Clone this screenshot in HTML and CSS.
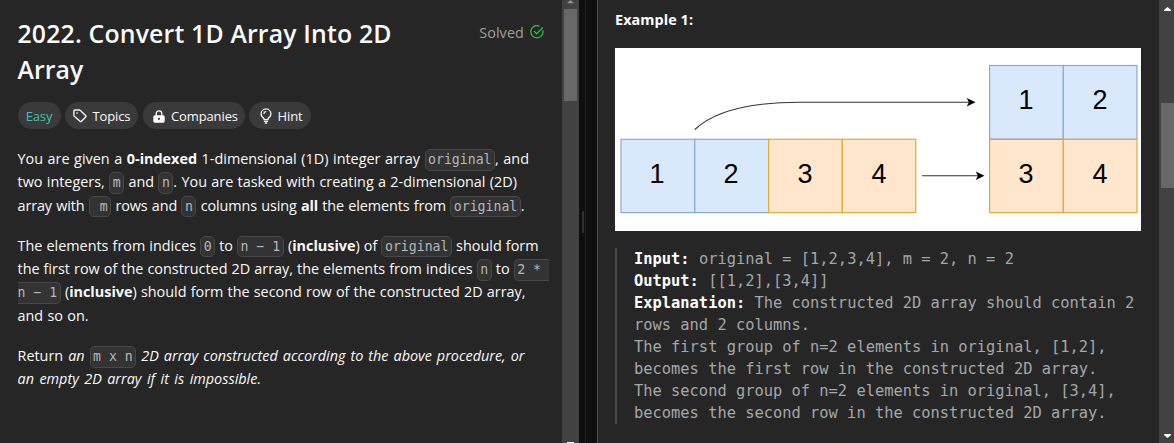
FILE: index.html
```html
<!DOCTYPE html>
<html lang="en">
<head>
<meta charset="utf-8">
<title>2022. Convert 1D Array Into 2D Array</title>
<link rel="stylesheet" href="styles.css">
</head>
<body>
<main class="app">
  <section class="problem">
    <header class="head">
      <h1><span class="line t1">2022. Convert 1D Array Into 2D</span><span class="line t2">Array</span></h1>
      <div class="solved"><span class="line">Solved</span>
        <svg width="14" height="14" viewBox="0 0 14 14" fill="none" stroke="#28b849" stroke-width="1.35" stroke-linecap="round" stroke-linejoin="round"><path d="M9 1A6.1 6.1 0 1 0 12.9 5.6M4.5 6.5l2.2 2.3 5.8-6"/></svg>
      </div>
    </header>
    <div class="tags">
      <span class="tag easy"><b class="line">Easy</b></span>
      <span class="tag topics"><svg width="14" height="14" viewBox="0 0 14 14" fill="none" stroke="#f2f2f2" stroke-width="1.4" stroke-linejoin="round"><path d="M.9 1.8Q.9 1 1.7 1H6.5Q7 1 7.4 1.4L12.8 6.8Q13.3 7.3 12.8 7.8L8.3 12.6Q7.8 13.1 7.3 12.6L1.3 7.2Q.9 6.8 .9 6.3Z"/><circle cx="4" cy="4.1" r=".8" fill="#f2f2f2" stroke="none"/></svg><b class="line">Topics</b></span>
      <span class="tag companies"><svg width="12" height="13" viewBox="0 0 12 13"><path d="M3.2 6V3.7a2.8 2.8 0 0 1 5.6 0V6" fill="none" stroke="#fff" stroke-width="1.3"/><rect x=".3" y="5.2" width="11.4" height="7.5" rx="1.6" fill="#fff"/><circle cx="6" cy="8.8" r="1.1" fill="#333"/></svg><b class="line">Companies</b></span>
      <span class="tag hint"><svg width="12" height="16" viewBox="0 0 12 16" fill="none" stroke="#f2f2f2" stroke-width="1.3" stroke-linecap="round"><path d="M4 11.6V10.5Q1.1 8.8 1.1 5.8a4.9 4.9 0 0 1 9.8 0Q10.9 8.8 8 10.5V11.6ZM4.4 13.4H7.6M5.3 15H6.7M4 5.6Q4 3.9 5.7 3.7"/></svg><b class="line">Hint</b></span>
    </div>
    <p>
      <span class="line w1">You are given a <strong>0-indexed</strong> 1-dimensional (1D) integer array <code>original</code>, and</span>
      <span class="line w2">two integers, <code>m</code> and <code>n</code>. You are tasked with creating a 2-dimensional (2D)</span>
      <span class="line w3">array with <code class="lead">m</code> rows and <code>n</code> columns using <strong>all</strong> the elements from <code>original</code>.</span>
    </p>
    <p>
      <span class="line w4">The elements from indices <code>0</code> to <code>n − 1</code> (<strong>inclusive</strong>) of <code>original</code> should form</span>
      <span class="line w5">the first row of the constructed 2D array, the elements from indices <code>n</code> to <code class="open-right">2 *</code></span>
      <span class="line w6"><code class="open-left">n − 1</code> (<strong>inclusive</strong>) should form the second row of the constructed 2D array,</span>
      <span class="line w7">and so on.</span>
    </p>
    <p>
      <span class="line w8">Return <em>an</em> <code>m x n</code> <em>2D array constructed according to the above procedure, or</em></span>
      <span class="line w9"><em>an empty 2D array if it is impossible.</em></span>
    </p>
  </section>
  <div class="scroll scroll-left">
    <svg class="arrow" width="7" height="4" viewBox="0 0 7 4"><path d="M0 3.2 3.5 0 7 3.2Z" fill="#929292"/></svg>
    <div class="thumb"></div>
    <div class="stub"></div>
  </div>
  <div class="divider"><div class="grip"></div></div>
  <section class="example">
    <h2 class="line">Example 1:</h2>
    <svg class="figure" width="526" height="183" viewBox="615 48 526 183">
      <rect x="615" y="48" width="526" height="183" fill="#fff"/>
      <g fill="#dae8fc" stroke="#8ca9d6" stroke-width="1.2">
        <rect x="621" y="139.3" width="73.8" height="73.3"/><rect x="694.8" y="139.3" width="73.8" height="73.3"/>
        <rect x="989.6" y="65.5" width="73.7" height="73.8"/><rect x="1063.3" y="65.5" width="73.7" height="73.8"/>
      </g>
      <g fill="#ffe6cc" stroke="#dfad35" stroke-width="1.2">
        <rect x="768.6" y="139.3" width="73.7" height="73.3"/><rect x="842.3" y="139.3" width="73.5" height="73.3"/>
        <rect x="989.6" y="139.3" width="73.7" height="73.3"/><rect x="1063.3" y="139.3" width="73.7" height="73.3"/>
      </g>
      <path d="M989.6 139.3H1063" stroke="#8ca9d6"/>
      <g fill="none" stroke="#333" stroke-width="1.1"><path d="M694.8 129.5Q724 102.2 800 102.2H969M922 175.8H978"/></g>
      <path d="M975.5 102.2l-8.8 4.3 2.2-4.3-2.2-4.3ZM984.5 175.8l-8.8 4.3 2.2-4.3-2.2-4.3Z" fill="#000"/>
      <g class="digits"><text x="657" y="183">1</text><text x="731" y="183">2</text><text x="805" y="183">3</text><text x="879" y="183">4</text><text x="1026" y="109">1</text><text x="1100" y="109">2</text><text x="1026" y="183">3</text><text x="1100" y="183">4</text></g>
    </svg>
    <pre><strong>Input:</strong> original = [1,2,3,4], m = 2, n = 2
<strong>Output:</strong> [[1,2],[3,4]]
<strong>Explanation:</strong> The constructed 2D array should contain 2
rows and 2 columns.
The first group of n=2 elements in original, [1,2],
becomes the first row in the constructed 2D array.
The second group of n=2 elements in original, [3,4],
becomes the second row in the constructed 2D array.</pre>
  </section>
  <div class="scroll scroll-right">
    <svg class="arrow" width="7" height="4" viewBox="0 0 7 4"><path d="M0 4V3L3.5 0 7 3V4Z" fill="#fff"/></svg>
    <div class="thumb"></div>
    <svg class="arrow down" width="7" height="4" viewBox="0 0 7 4"><path d="M0 0V1L3.5 4 7 1V0Z" fill="#fff"/></svg>
  </div>
</main>
</body>
</html>
```
FILE: styles.css
```css
* { box-sizing: border-box; }
body { margin: 0; background: #262626; color: #fafafa; font-family: "Open Sans", "Noto Sans", sans-serif; overflow: hidden; }
.app { display: flex; width: 1174px; height: 443px; }
.line { display: block; white-space: nowrap; }
.problem { width: 562px; padding: 15px 0 0 17.5px; font-size: 14.4px; line-height: 23.3px; }
.head { display: flex; justify-content: space-between; height: 72px; padding-right: 18px; }
h1 { margin: 0; font-size: 24.8px; font-weight: 600; line-height: 36px; letter-spacing: .1px; }
.t1 { width: 376px; letter-spacing: .18px; }
.solved { display: flex; align-items: center; height: 34px; gap: 6px; color: #9f9f9f; letter-spacing: .1px; }
.solved .line { padding-top: 2px; }
.tags { display: flex; height: 27px; margin: 15px 0 18px; gap: 4px; font-size: 13px; }
.tag { display: flex; align-items: center; gap: 6px; height: 27px; border-radius: 14px; background: #3a3a3a; padding-top: 1px; letter-spacing: -.12px; }
.tag b { font-weight: 400; padding-top: 2px; }
.easy { width: 43px; justify-content: center; color: #46c0ae; }
.topics { width: 73px; padding-left: 8px; }
.companies { width: 102px; margin-left: 1px; padding-left: 10.5px; }
.hint { width: 62px; padding-left: 11px; }
p { margin: 0 0 17px; }
p .line { height: 23.3px; white-space: normal; text-align-last: justify; }
.w1 { width: 511.5px; }
.w2 { width: 499.5px; }
.w3 { width: 507px; letter-spacing: -.1px; }
.w4 { width: 521px; }
.w5 { width: 531.5px; }
.w6 { width: 508px; }
.w7 { width: 71px; }
.w8 { width: 507px; }
.w9 { width: 243.5px; }
code { display: inline-block; height: 21.5px; padding: 0 2.5px; border: 1px solid #484848; border-radius: 5px; background: #333; color: #b5b8bd; font: 13.2px/20px "DejaVu Sans Mono", monospace; letter-spacing: 0; white-space: pre; text-align-last: left; vertical-align: 0; margin: -3px 0; }
.lead { padding-left: 10px; }
.open-right { padding-right: 8px; border-right: 0; border-radius: 5px 0 0 5px; }
.open-left { padding-left: 0; border-left: 0; border-radius: 0 5px 5px 0; }
.scroll { display: flex; flex-direction: column; align-items: center; background: #424242; }
.scroll .thumb { width: 13px; background: #686868; }
.scroll-left { width: 17px; }
.scroll-left .thumb { height: 92px; margin-top: 5px; }
.stub { width: 7px; height: 1px; margin-top: auto; background: #fff; }
.divider { display: flex; align-items: center; width: 19px; padding-left: 3px; background: linear-gradient(90deg, #0f0f0f 6px, #202020 6px 7px, #0f0f0f 7px 18px, #505050 18px); }
.grip { width: 2px; height: 22px; background: #303030; }
.example { width: 561px; padding: 9px 0 0 17px; }
h2 { margin: 0 0 17px; font-size: 14.4px; line-height: 22px; font-weight: 700; letter-spacing: .08px; color: #fff; }
.figure { display: block; }
.digits { font-family: "Liberation Sans", Arial, sans-serif; font-size: 27px; text-anchor: middle; fill: #000; }
pre { margin: 17px 0 0; padding: 0 0 0 17px; border-left: 2px solid #484848; color: #a5a7aa; font: 15.4px/22px "DejaVu Sans Mono", monospace; }
pre strong { color: #fff; }
.scroll-right { width: 15px; padding: 7px 0 5px; align-items: flex-end; }
.scroll-right .thumb { height: 85px; margin-top: 92px; }
.scroll-right .arrow { margin-right: 3px; }
.scroll-right .down { margin-top: auto; }
```
